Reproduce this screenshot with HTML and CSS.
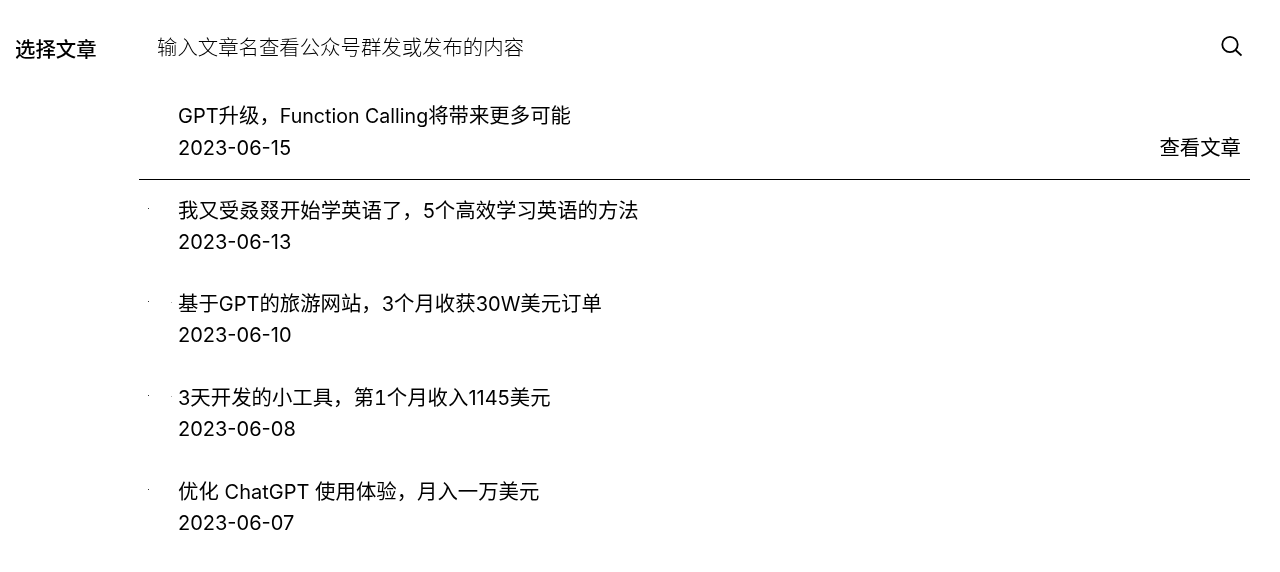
FILE: index.html
```html
<!DOCTYPE html>
<html lang="zh-CN">
<head>
  <meta charset="UTF-8">
  <title>选择文章</title>
  <link rel="stylesheet" href="styles.css">
</head>
<body>
  <div class="page">
    <div class="label">选择文章</div>
    <div class="panel">
      <div class="search">
        <span class="placeholder">输入文章名查看公众号群发或发布的内容</span>
        <svg class="search-icon" width="22" height="22" viewBox="0 0 22 22" fill="none" stroke="#000" stroke-width="1.8">
          <circle cx="10" cy="9.5" r="7.7"/>
          <path d="M15.5 15L21.5 20.5"/>
        </svg>
      </div>
      <ul class="list">
        <li class="row row-active">
          <div class="info">
            <div><span class="en">GPT</span>升级，<span class="en narrow">Function Calling</span>将带来更多可能</div>
            <div class="en date">2023-06-15</div>
          </div>
          <a class="view">查看文章</a>
        </li>
        <li class="row">
          <span class="dot"></span>
          <div class="info">
            <div>我又受叒叕开始学英语了，<span class="en">5</span>个高效学习英语的方法</div>
            <div class="en">2023-06-13</div>
          </div>
        </li>
        <li class="row">
          <span class="dot"></span>
          <span class="speck"></span>
          <div class="info">
            <div>基于<span class="en">GPT</span>的旅游网站，<span class="en">3</span>个月收获<span class="en">30W</span>美元订单</div>
            <div class="en">2023-06-10</div>
          </div>
        </li>
        <li class="row">
          <span class="dot"></span>
          <span class="speck"></span>
          <div class="info">
            <div><span class="en">3</span>天开发的小工具，第<span class="en wide">1</span>个月收入<span class="en">1145</span>美元</div>
            <div class="en">2023-06-08</div>
          </div>
        </li>
        <li class="row">
          <span class="dot"></span>
          <div class="info">
            <div>优化 <span class="en">ChatGPT</span> 使用体验，月入一万美元</div>
            <div class="en">2023-06-07</div>
          </div>
        </li>
      </ul>
    </div>
  </div>
</body>
</html>
```

FILE: styles.css
```css
html, body { margin: 0; background: #fff; }
body { font-family: Inter, "Noto Sans CJK SC", sans-serif; font-size: 20.4px; line-height: 31px; color: #000; overflow: hidden; }
.page { display: flex; height: 572px; padding: 34px 30px 0 15px; box-sizing: border-box; filter: contrast(1.8); }
.label { width: 124px; flex: none; font-weight: 500; }
.panel { flex: 1; min-width: 0; }
.search { display: flex; justify-content: space-between; align-items: center; height: 26px; padding: 0 8px 0 18px; }
.search-icon { margin-top: -3px; }
.placeholder { font-weight: 300; }
.list { list-style: none; margin: 42px 0 0; padding: 0; }
.en { font-size: 20px; }
.narrow { font-size: 19.6px; }
.wide { font-variant-numeric: tabular-nums; }
.date { margin-top: 1px; }
.row { display: flex; height: 93.7px; box-sizing: border-box; padding: 0 9px; position: relative; }
.row-active { align-items: flex-end; height: 78px; margin-bottom: 14.6px; padding-bottom: 15px; border-bottom: 1px solid #000; }
.dot { width: 1px; height: 1px; background: #555; flex: none; margin-top: 13px; }
.speck { position: absolute; left: 32px; top: 14px; width: 1px; height: 1px; background: #999; }
.info { flex: 1; margin-left: 30px; }
.row .dot + .info, .row .speck + .info { margin-left: 29px; }
.view { flex: none; margin-bottom: 1px; }
```
